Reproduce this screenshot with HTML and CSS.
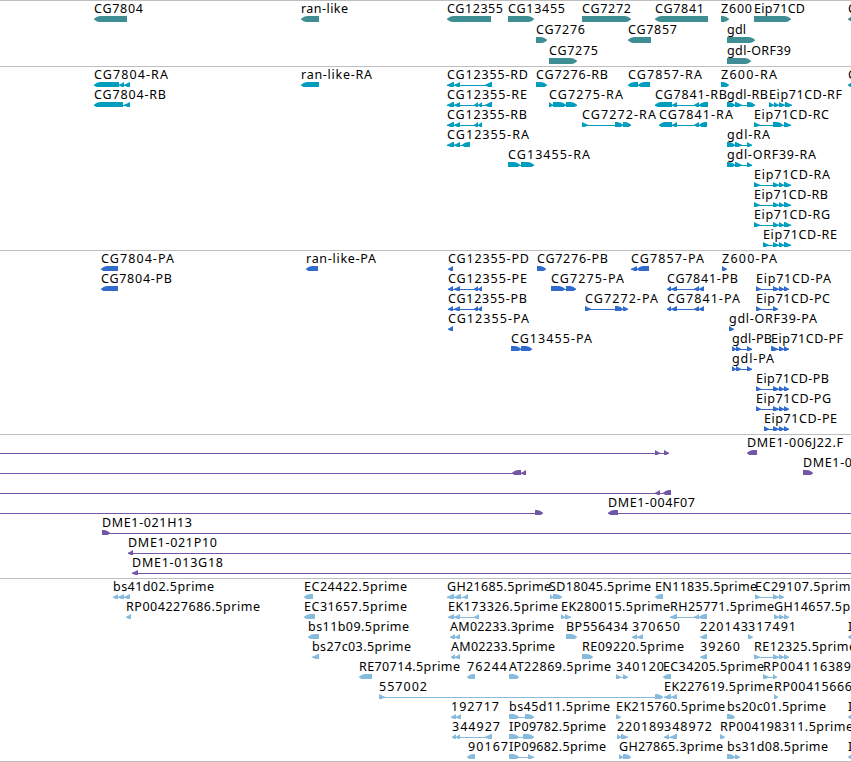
FILE: index.html
```
<!DOCTYPE html>
<html lang="en">
<head>
  <meta charset="UTF-8" />
  <meta name="viewport" content="width=device-width, initial-scale=1.0"/>
  <title>Genome Browser</title>
  <link rel="stylesheet" href="styles.css">
</head>
<body>
  <div class="browser">
    <div class="track genes" id="genes"></div>
    <div class="track transcripts" id="transcripts"></div>
    <div class="track proteins" id="proteins"></div>
    <div class="track cdna" id="cdna"></div>
    <div class="track est" id="est"></div>
  </div>

  <script src="tracks.js"></script>
</body>
</html>
```
FILE: styles.css
```
body {
  margin: 0;
  background: #fff;
  overflow: hidden;
}
.browser {
  width: 851px;
  overflow: hidden;
  border-bottom: 1px solid #bebebe;
}
.track {
  display: flex;
  flex-direction: column;
  border-top: 1px solid #bebebe;
  padding-bottom: 3px;
}
.row {
  display: block;
  width: 851px;
  height: 20px;
}
.genes .row {
  height: 21px;
}
.genes, .est {
  padding-bottom: 2px;
}
.label {
  font-family: "Noto Sans", "DejaVu Sans", sans-serif;
  font-size: 12.5px;
  fill: #000;
}
.intron {
  shape-rendering: crispEdges;
}
.genes { fill: #3e8e94; }
.transcripts { fill: #009dbf; }
.proteins { fill: #316ccd; }
.cdna { fill: #7456a7; }
.est { fill: #87bbdd; }
```
FILE: tracks.js
```
// feature: [label, label start, label end, strand, exons]
const gdlRA = '727-735 735-742 747-752';
const eipR = '754-760 773-779 779-784 784-791';
const eipP = '756-761 773-779 779-784 784-789';
const gdlP = '732-736 736-741 747-752';

const tracks = {
  genes: [
    [
      ['CG7804', 94, 143, '-', '94-127'],
      ['ran-like', 301, 348, '-', '301-319'],
      ['CG12355', 447, 503, '-', '447-491'],
      ['CG13455', 508, 565, '+', '508-534'],
      ['CG7272', 582, 631, '+', '582-631'],
      ['CG7841', 655, 704, '-', '655-708'],
      ['Z600', 721, 752, '+', '721-729'],
      ['Eip71CD', 754, 805, '+', '754-791'],
      ['C', 848, 857, '-', '848-870']
    ],
    [
      ['CG7276', 536, 585, '+', '536-547'],
      ['CG7857', 628, 677, '-', '628-651'],
      ['gdl', 727, 746, '+', '727-755']
    ],
    [
      ['CG7275', 549, 598, '+', '549-577'],
      ['gdl-ORF39', 727, 791, '+', '727-751']
    ]
  ],
  transcripts: [
    [
      ['CG7804-RA', 94, 168, '-', '94-119 119-124 124-130'],
      ['ran-like-RA', 301, 372, '-', '301-319'],
      ['CG12355-RD', 447, 528, '-', '447-454 454-460 485-492'],
      ['CG7276-RB', 536, 608, '+', '536-547'],
      ['CG7857-RA', 628, 702, '-', '628-638 638-650'],
      ['Z600-RA', 721, 777, '+', '721-729'],
      ['C', 848, 857, '-', '848-870']
    ],
    [
      ['CG7804-RB', 94, 166, '-', '94-123 124-130'],
      ['CG12355-RE', 447, 527, '-', '447-454 454-460 474-478 478-482 485-492'],
      ['CG7275-RA', 549, 623, '+', '549-553 553-566 566-577'],
      ['CG7841-RB', 655, 727, '-', '655-672 672-677 694-699 699-708'],
      ['gdl-RB', 727, 768, '+', '727-735 735-742 747-755'],
      ['Eip71CD-RF', 769, 842, '+', '769-774 774-779 779-785 785-792']
    ],
    [
      ['CG12355-RB', 447, 527, '-', '447-454 454-460 474-478 478-482'],
      ['CG7272-RA', 582, 656, '+', '582-588 615-623 623-631'],
      ['CG7841-RA', 659, 733, '-', '659-672 672-677 694-699 699-707'],
      ['Eip71CD-RC', 754, 829, '+', '754-760 773-783 784-791']
    ],
    [
      ['CG12355-RA', 447, 529, '-', '447-454 454-460 462-470'],
      ['gdl-RA', 727, 770, '+', gdlRA]
    ],
    [
      ['CG13455-RA', 508, 590, '+', '508-520 521-534'],
      ['gdl-ORF39-RA', 727, 816, '+', gdlRA]
    ],
    [['Eip71CD-RA', 754, 830, '+', eipR]],
    [['Eip71CD-RB', 754, 828, '+', eipR]],
    [['Eip71CD-RG', 754, 830, '+', eipR]],
    [['Eip71CD-RE', 763, 837, '+', '763-769 773-779 779-784 784-791']]
  ],
  proteins: [
    [
      ['CG7804-PA', 101, 174, '-', '101-118'],
      ['ran-like-PA', 306, 376, '-', '306-318'],
      ['CG12355-PD', 448, 529, '-', '448-453'],
      ['CG7276-PB', 537, 608, '+', '537-546'],
      ['CG7857-PA', 631, 704, '-', '631-637 637-649'],
      ['Z600-PA', 722, 777, '+', '722-727']
    ],
    [
      ['CG7804-PB', 101, 172, '-', '101-118'],
      ['CG12355-PE', 448, 527, '-', '448-453 454-460 474-478 478-482'],
      ['CG7275-PA', 551, 624, '+', '551-565 566-576'],
      ['CG7841-PB', 667, 738, '-', '667-671 671-677 694-699 699-704'],
      ['Eip71CD-PA', 756, 831, '+', eipP]
    ],
    [
      ['CG12355-PB', 448, 527, '-', '448-453 454-460 474-478 478-482'],
      ['CG7272-PA', 585, 658, '+', '585-591 615-623 623-628'],
      ['CG7841-PA', 667, 740, '-', '667-671 671-677 694-699 699-704'],
      ['Eip71CD-PC', 756, 830, '+', '756-761 773-778']
    ],
    [
      ['CG12355-PA', 448, 529, '-', '448-453'],
      ['gdl-ORF39-PA', 729, 817, '+', '729-734']
    ],
    [
      ['CG13455-PA', 511, 592, '+', '511-521 521-532'],
      ['gdl-PB', 732, 772, '+', gdlP],
      ['Eip71CD-PF', 771, 843, '+', '771-778 779-784 784-789']
    ],
    [['gdl-PA', 732, 774, '+', gdlP]],
    [['Eip71CD-PB', 756, 829, '+', eipP]],
    [['Eip71CD-PG', 756, 831, '+', eipP]],
    [['Eip71CD-PE', 764, 837, '+', '764-769 773-779 779-784 784-789']]
  ],
  cdna: [
    [
      ['', 0, 0, '+', '-20--10 655-660 664-669'],
      ['DME1-006J22.F', 747, 843, '-', '747-757']
    ],
    [
      ['', 0, 0, '-', '-20--10 512-521 521-526'],
      ['DME1-0', 803, 852, '+', '803-813']
    ],
    [['', 0, 0, '-', '-20--10 655-660 663-671']],
    [
      ['', 0, 0, '+', '-20--10 535-543'],
      ['DME1-004F07', 608, 695, '-', '608-618 870-880']
    ],
    [['DME1-021H13', 102, 192, '+', '102-110 870-880']],
    [['DME1-021P10', 128, 217, '-', '128-133 870-880']],
    [['DME1-013G18', 132, 223, '-', '132-138 870-880']]
  ],
  est: [
    [
      ['bs41d02.5prime', 113, 214, '-', '113-118 118-124 124-130'],
      ['EC24422.5prime', 304, 407, '-', '304-313'],
      ['GH21685.5prime', 447, 551, '-', '447-454 454-461 463-468'],
      ['SD18045.5prime', 549, 651, '+', '550-553 553-562'],
      ['EN11835.5prime', 655, 757, '-', '655-663'],
      ['EC29107.5prime', 755, 858, '+', '755-760 773-779 779-784']
    ],
    [
      ['RP004227686.5prime', 126, 260, '-', '126-131'],
      ['EC31657.5prime', 304, 407, '-', '304-315'],
      ['EK173326.5prime', 448, 558, '-', '448-454 454-460 474-479'],
      ['EK280015.5prime', 561, 670, '+', '561-565 565-571'],
      ['RH25771.5prime', 670, 774, '-', '670-677 694-699 699-707'],
      ['GH14657.5prime', 774, 879, '+', '774-779 779-784 784-789']
    ],
    [
      ['bs11b09.5prime', 308, 409, '-', '308-319'],
      ['AM02233.3prime', 450, 554, '-', '450-455 455-460'],
      ['BP556434', 566, 628, '+', '566-577'],
      ['370650', 632, 680, '-', '632-637 637-643'],
      ['220143', 700, 748, '-', '700-707'],
      ['317491', 748, 796, '+', '748-753'],
      ['I', 848, 852, '-', '848-870']
    ],
    [
      ['bs27c03.5prime', 312, 411, '-', '312-319'],
      ['AM02233.5prime', 451, 555, '-', '451-455 455-460'],
      ['RE09220.5prime', 582, 684, '+', '582-593'],
      ['39260', 700, 740, '-', '700-707'],
      ['RE12325.5prime', 754, 856, '+', '754-760 773-779 779-784 784-789']
    ],
    [
      ['RE70714.5prime', 359, 460, '-', '359-372'],
      ['76244', 467, 507, '-', '467-475'],
      ['AT22869.5prime', 509, 611, '+', '509-519'],
      ['340120', 616, 664, '+', '616-621 623-628'],
      ['EC34205.5prime', 663, 764, '-', '663-671'],
      ['RP004116389', 763, 851, '+', '763-769 773-777']
    ],
    [
      ['557002', 379, 427, '+', '379-385 655-663'],
      ['EK227619.5prime', 664, 773, '-', '664-671 671-677'],
      ['RP00415666', 774, 852, '+', '774-778']
    ],
    [
      ['192717', 451, 499, '-', '451-456 456-461'],
      ['bs45d11.5prime', 509, 610, '+', '509-519 525-534'],
      ['EK215760.5prime', 616, 725, '+', '616-621'],
      ['bs20c01.5prime', 727, 826, '+', '727-735'],
      ['I', 848, 852, '-', '848-870']
    ],
    [
      ['344927', 452, 500, '-', '452-456 456-460 485-492'],
      ['IP09782.5prime', 509, 606, '+', '509-519 523-534'],
      ['220189', 617, 664, '+', '617-621 621-628'],
      ['348972', 664, 712, '-', '664-669 670-677'],
      ['RP004198311.5prime', 720, 853, '+', '720-725']
    ],
    [
      ['90167', 468, 508, '-', '467-475'],
      ['IP09682.5prime', 509, 606, '+', '509-519 528-534'],
      ['GH27865.3prime', 619, 723, '+', '619-623 623-631'],
      ['bs31d08.5prime', 727, 828, '+', '727-735 735-740'],
      ['I', 848, 852, '-', '848-870']
    ]
  ]
};

// box with an arrow head on the strand side, short exons are all head
function exon(a, b, strand) {
  const d = strand === '+' ? -1 : 1;
  const tip = strand === '+' ? b : a;
  const back = strand === '+' ? a : b;
  const head = Math.min(b - a, 6);
  const bulge = b - a > 7 ? 0.6 : 0;
  const mid = tip + d * head * 0.5;
  const pts = [
    [back, 15],
    [tip + d * head, 15],
    [mid, 16.4 - bulge],
    [tip, 17.7],
    [tip, 18.5],
    [mid, 19.8 + bulge],
    [tip + d * head, 21.2],
    [back, 21.2]
  ];
  return `<polygon class="exon" points="${pts.join(' ')}"/>`;
}

function feature([label, x, end, strand, list]) {
  const exons = [...list.matchAll(/(-?\d+)-(-?\d+)/g)].map(m => [+m[1], +m[2]]);
  let out = '';
  if (exons.length > 1) {
    const first = exons[0][0];
    const last = exons[exons.length - 1][1];
    out += `<rect class="intron" x="${first}" y="18" width="${last - first}" height="1"/>`;
  }
  out += exons.map(([a, b]) => exon(a, b, strand)).join('');
  if (label) {
    out += `<text class="label" x="${x}" y="12" textLength="${end - x}">${label}</text>`;
  }
  return out;
}

for (const id in tracks) {
  document.getElementById(id).innerHTML = tracks[id]
    .map(row => `<svg class="row">${row.map(feature).join('')}</svg>`)
    .join('');
}
```
